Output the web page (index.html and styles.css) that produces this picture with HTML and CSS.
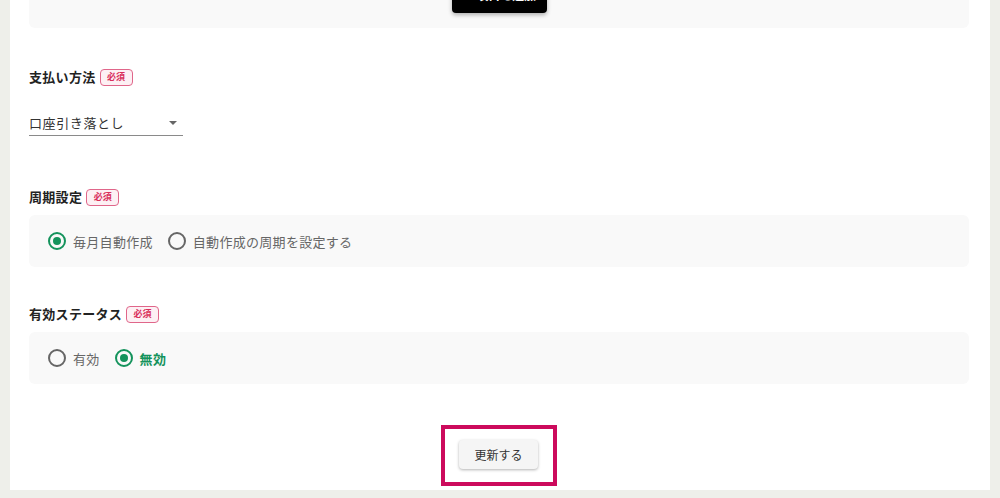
FILE: index.html
```html
<!DOCTYPE html>
<html lang="ja">
<head>
  <meta charset="UTF-8">
  <meta name="viewport" content="width=device-width, initial-scale=1.0">
  <title>請求設定の編集</title>
  <link rel="stylesheet" href="styles.css">
</head>
<body>
  <div class="page">
    <div class="card">
      <div class="items-panel">
        <button class="add-btn">＋ 項目を追加</button>
      </div>

      <div class="field field-payment">
        <div class="field-label">支払い方法<span class="required">必須</span></div>
        <div class="select">
          <span class="select-value">口座引き落とし</span>
          <span class="select-arrow"></span>
        </div>
      </div>

      <div class="field field-cycle">
        <div class="field-label">周期設定<span class="required">必須</span></div>
        <div class="radio-panel">
          <label class="radio checked"><span class="radio-icon"></span><span class="radio-text">毎月自動作成</span></label>
          <label class="radio"><span class="radio-icon"></span><span class="radio-text">自動作成の周期を設定する</span></label>
        </div>
      </div>

      <div class="field field-status">
        <div class="field-label">有効ステータス<span class="required">必須</span></div>
        <div class="radio-panel">
          <label class="radio"><span class="radio-icon"></span><span class="radio-text">有効</span></label>
          <label class="radio checked strong"><span class="radio-icon"></span><span class="radio-text">無効</span></label>
        </div>
      </div>

      <div class="actions">
        <div class="highlight">
          <button class="submit-btn">更新する</button>
        </div>
      </div>
    </div>
  </div>
</body>
</html>
```

FILE: styles.css
```css
body {
  margin: 0;
  font-family: 'Noto Sans CJK JP', 'Noto Sans', sans-serif;
  background: #eeefea;
  overflow: hidden;
  color: #222;
}

.page {
  padding: 0 10px 8px;
}

.card {
  background: white;
  margin-top: -40px;
  padding: 0 21px 4px 19px;
}

/* top panel, mostly scrolled out of view */
.items-panel {
  background: #f9f9f9;
  border-radius: 0 0 6px 6px;
  padding: 16px 0 15px;
  display: flex;
  justify-content: center;
}

.add-btn {
  width: 95px;
  height: 37px;
  background: black;
  color: white;
  border: none;
  border-radius: 4px;
  font-family: inherit;
  font-size: 12px;
  font-weight: bold;
  box-shadow: 0 2px 4px rgba(0, 0, 0, 0.3);
}

.field-label {
  display: flex;
  align-items: center;
  font-size: 13px;
  font-weight: bold;
  line-height: 20px;
  letter-spacing: 0.3px;
}

.required {
  display: inline-flex;
  align-items: center;
  justify-content: center;
  width: 31px;
  height: 15px;
  margin-left: 4px;
  border: 1px solid #e0668a;
  border-radius: 4px;
  background: #fdf0f4;
  color: #d92f5c;
  font-size: 9px;
  font-weight: bold;
  letter-spacing: 0;
}

.field-payment {
  margin-top: 39px;
}

.select {
  width: 154px;
  margin-top: 26px;
  padding-bottom: 2px;
  border-bottom: 1px solid #8a8a8a;
  display: flex;
  align-items: center;
  justify-content: space-between;
  line-height: 20px;
}

.select-value {
  font-size: 13px;
  letter-spacing: 0.6px;
  color: #333;
}

.select-arrow {
  width: 0;
  height: 0;
  margin-right: 6px;
  border-left: 4px solid transparent;
  border-right: 4px solid transparent;
  border-top: 4px solid #666;
}

.field-cycle {
  margin-top: 51px;
}

.field-status {
  margin-top: 37px;
}

.radio-panel {
  margin-top: 8px;
  height: 52px;
  background: #f9f9f9;
  border-radius: 6px;
  display: flex;
  align-items: center;
  padding-left: 19px;
  gap: 15px;
}

.radio {
  display: flex;
  align-items: center;
  gap: 7px;
  font-size: 13px;
  color: #666;
  letter-spacing: 0.3px;
}

.radio-icon {
  width: 14px;
  height: 14px;
  border: 2px solid #666;
  border-radius: 50%;
  display: flex;
  align-items: center;
  justify-content: center;
}

.radio.checked .radio-icon {
  border-color: #14935c;
}

.radio.checked .radio-icon::after {
  content: '';
  width: 8px;
  height: 8px;
  border-radius: 50%;
  background: #14935c;
}

.radio.strong .radio-text {
  color: #14935c;
  font-weight: bold;
}

.actions {
  margin-top: 41px;
  display: flex;
  justify-content: center;
}

/* annotation box round the submit button */
.highlight {
  border: 4px solid #cc0a5c;
  padding: 11px 15px 13px 14px;
}

.submit-btn {
  width: 79px;
  height: 29px;
  background: #f5f5f5;
  border: none;
  border-radius: 4px;
  box-shadow: 0 1px 3px rgba(0, 0, 0, 0.3);
  font-family: inherit;
  font-size: 12px;
  color: #333;
}
```
